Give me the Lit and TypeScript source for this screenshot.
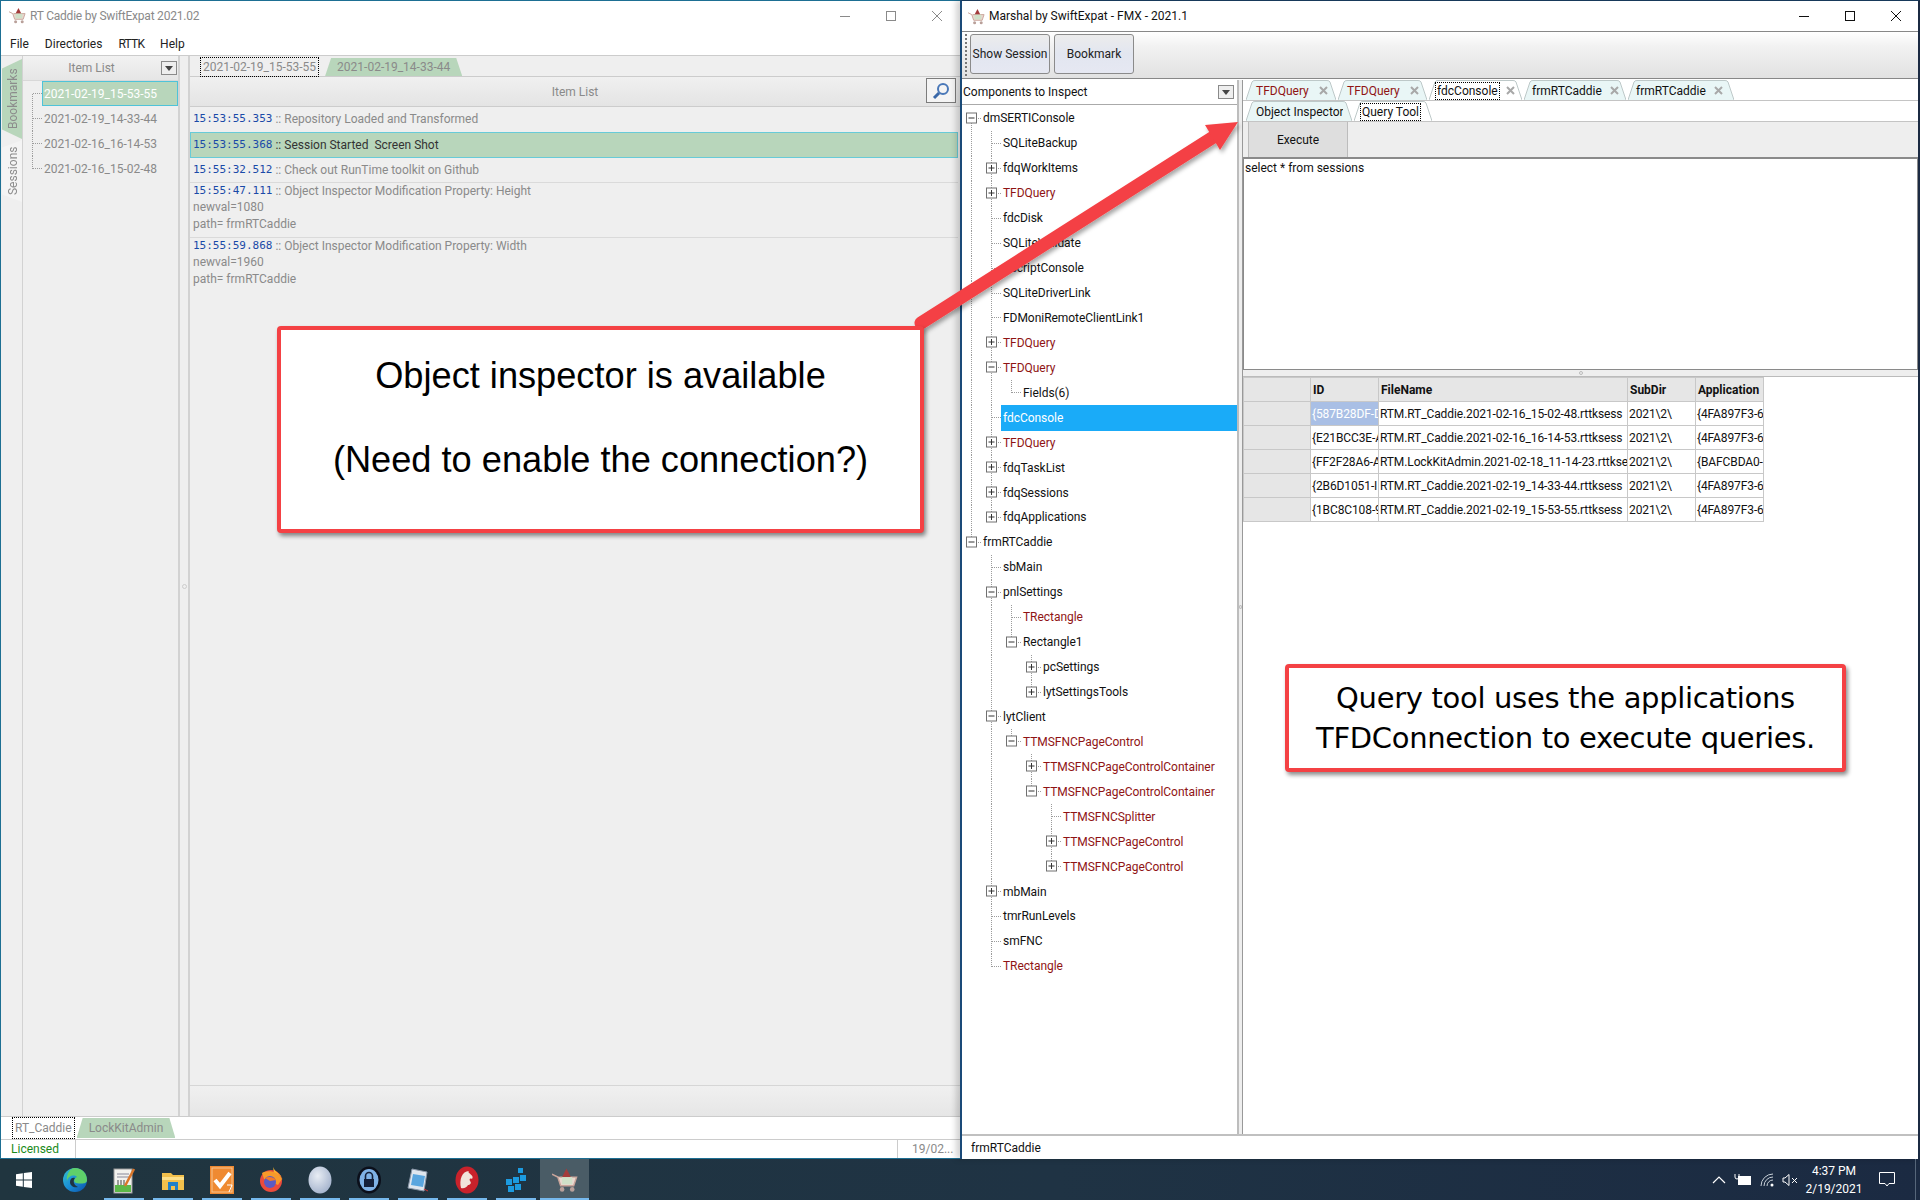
import { LitElement, html, css, svg } from "lit";
import { customElement } from "lit/decorators.js";

type Node = [number, string, string, boolean, boolean?];
const TREE: Node[] = [
  [0, "dmSERTIConsole", "-", false],
  [1, "SQLiteBackup", "", false],
  [1, "fdqWorkItems", "+", false],
  [1, "TFDQuery", "+", true],
  [1, "fdcDisk", "", false],
  [1, "SQLiteValidate", "", false],
  [1, "dScriptConsole", "", false],
  [1, "SQLiteDriverLink", "", false],
  [1, "FDMoniRemoteClientLink1", "", false],
  [1, "TFDQuery", "+", true],
  [1, "TFDQuery", "-", true],
  [2, "Fields(6)", "", false],
  [1, "fdcConsole", "", false, true],
  [1, "TFDQuery", "+", true],
  [1, "fdqTaskList", "+", false],
  [1, "fdqSessions", "+", false],
  [1, "fdqApplications", "+", false],
  [0, "frmRTCaddie", "-", false],
  [1, "sbMain", "", false],
  [1, "pnlSettings", "-", false],
  [2, "TRectangle", "", true],
  [2, "Rectangle1", "-", false],
  [3, "pcSettings", "+", false],
  [3, "lytSettingsTools", "+", false],
  [1, "lytClient", "-", false],
  [2, "TTMSFNCPageControl", "-", true],
  [3, "TTMSFNCPageControlContainer", "+", true],
  [3, "TTMSFNCPageControlContainer", "-", true],
  [4, "TTMSFNCSplitter", "", true],
  [4, "TTMSFNCPageControl", "+", true],
  [4, "TTMSFNCPageControl", "+", true],
  [1, "mbMain", "+", false],
  [1, "tmrRunLevels", "", false],
  [1, "smFNC", "", false],
  [1, "TRectangle", "", true],
];

const hasNext = (i: number, l: number) => {
  for (let j = i + 1; j < TREE.length; j++) {
    if (TREE[j][0] === l) return true;
    if (TREE[j][0] < l) return false;
  }
  return false;
};

const gutter = (i: number) => {
  const [level, , exp] = TREE[i];
  const w = 19 + 20 * level;
  const H = 25;
  const cy = 12.5;
  const parts = [];
  for (let l = 0; l < level; l++) {
    if (hasNext(i, l)) {
      const c = 9.5 + 20 * l;
      parts.push(svg`<line x1=${c} x2=${c} y1="0" y2=${H} class="dot"/>`);
    }
  }
  const c = 9.5 + 20 * level;
  const top = i === 0 ? cy : 0;
  parts.push(svg`<line x1=${c} x2=${c} y1=${top} y2=${hasNext(i, level) ? H : cy} class="dot"/>`);
  parts.push(svg`<line x1=${c} x2=${w} y1=${cy} y2=${cy} class="dot"/>`);
  if (exp) {
    parts.push(svg`<rect x=${c - 5} y=${cy - 5.5} width="10" height="10" fill="#fff" stroke="#707070"/>`);
    parts.push(svg`<line x1=${c - 3} x2=${c + 3} y1=${cy - 0.5} y2=${cy - 0.5} stroke="#333"/>`);
    if (exp === "+") parts.push(svg`<line x1=${c} x2=${c} y1=${cy - 3.5} y2=${cy + 2.5} stroke="#333"/>`);
  }
  return html`<svg class="gut" width=${w} height=${H}>${parts}</svg>`;
};

const ITEMS = ["2021-02-19_15-53-55", "2021-02-19_14-33-44", "2021-02-16_16-14-53", "2021-02-16_15-02-48"];

const LOG = [
  { t: "15:53:55.353", m: ["Repository Loaded and Transformed"], h: 25, cls: "" },
  { t: "15:53:55.368", m: ["Session Started\u00a0\u00a0Screen Shot"], h: 26, cls: "sel" },
  { t: "15:55:32.512", m: ["Check out RunTime toolkit on Github"], h: 25, cls: "line" },
  { t: "15:55:47.111", m: ["Object Inspector Modification Property: Height", "newval=1080", "path= frmRTCaddie"], h: 55, cls: "line" },
  { t: "15:55:59.868", m: ["Object Inspector Modification Property: Width", "newval=1960", "path= frmRTCaddie"], h: 55, cls: "" },
];

const GRID = [
  ["{587B28DF-D", "RTM.RT_Caddie.2021-02-16_15-02-48.rttksess", "2021\\2\\", "{4FA897F3-6"],
  ["{E21BCC3E-A", "RTM.RT_Caddie.2021-02-16_16-14-53.rttksess", "2021\\2\\", "{4FA897F3-6"],
  ["{FF2F28A6-A", "RTM.LockKitAdmin.2021-02-18_11-14-23.rttksess", "2021\\2\\", "{BAFCBDA0-"],
  ["{2B6D1051-I", "RTM.RT_Caddie.2021-02-19_14-33-44.rttksess", "2021\\2\\", "{4FA897F3-6"],
  ["{1BC8C108-9", "RTM.RT_Caddie.2021-02-19_15-53-55.rttksess", "2021\\2\\", "{4FA897F3-6"],
];

const cartIcon = (s = 18) => html`<svg width=${s} height=${s} viewBox="0 0 18 18">
  <path d="M0 5 L4 7 L6 13 H15 L17 7 H5" fill="#e9d8cf" stroke="#c9a49a" stroke-width="1"/>
  <path d="M7 7 L10 1 L13 7 Z" fill="#a33b3b"/><rect x="7" y="7" width="7" height="5" fill="#cfe0c8"/>
  <circle cx="7" cy="15.5" r="1.6" fill="#b9a09a"/><circle cx="14" cy="15.5" r="1.6" fill="#b9a09a"/>
</svg>`;

const slantL = (fill: string, stroke: string) => html`<svg class="edge" width="9" height="20" viewBox="0 0 9 20"><path d="M0 20 L6 2 Q6.6 .5 9 .5 V20 Z" fill=${fill}/><path d="M0 20 L6 2 Q6.6 .5 9 .5" fill="none" stroke=${stroke}/></svg>`;
const slantR = (fill: string, stroke: string) => html`<svg class="edge" width="9" height="20" viewBox="0 0 9 20"><path d="M9 20 L3 2 Q2.4 .5 0 .5 V20 Z" fill=${fill}/><path d="M9 20 L3 2 Q2.4 .5 0 .5" fill="none" stroke=${stroke}/></svg>`;

const xIcon = (m: number) => html`<svg class="tx" width="9" height="9" viewBox="0 0 9 9" style="margin-left:${m}px"><path d="M1 1 L8 8 M8 1 L1 8" stroke="#a8a8a8" stroke-width="2"/></svg>`;

const tabTop = (label: string, w: number, o: { red?: boolean; active?: boolean; x?: number; shift?: number } = {}) => {
  const fill = o.active ? "#fff" : "#e9f6f6";
  const stroke = "#bdc8c8";
  return html`<div class="ttab" style="width:${w}px">
    ${slantL(fill, stroke)}
    <div class="tmid" style="background:${fill}">
      <span class="tlab ${o.red ? "red" : ""} ${o.active ? "focus" : ""}" style="margin-left:${o.shift ?? 0}px">${label}</span>${o.x ? xIcon(o.x) : ""}
    </div>
    ${slantR(fill, stroke)}
  </div>`;
};

const winBtns = (c: string) => html`<div class="wbtns">
  <div class="wb"><svg width="12" height="12"><line x1="1" x2="11" y1="6.5" y2="6.5" stroke=${c}/></svg></div>
  <div class="wb"><svg width="12" height="12"><rect x="1.5" y="1.5" width="9" height="9" fill="none" stroke=${c}/></svg></div>
  <div class="wb"><svg width="12" height="12"><path d="M1 1 L11 11 M11 1 L1 11" stroke=${c} fill="none"/></svg></div>
</div>`;

const drop = html`<svg class="drop" width="16" height="14"><rect x=".5" y=".5" width="15" height="13" fill="#eee" stroke="#8a8a8a"/><path d="M4 5 H12 L8 10 Z" fill="#444"/></svg>`;

const tbIcons = [
  html`<svg width="26" height="26" viewBox="0 0 26 26"><defs><linearGradient id="ed" x1="0" y1="0" x2="1" y2="1"><stop offset="0" stop-color="#35c1d1"/><stop offset=".5" stop-color="#1a8fd6"/><stop offset="1" stop-color="#0a4fa8"/></linearGradient></defs><circle cx="13" cy="13" r="12" fill="url(#ed)"/><path d="M13 1 C20 1 25 6 25 13 C25 17 20 17 14 16 C11 15 12 11 15 10 C12 7 6 9 5 14 C4 9 7 1 13 1Z" fill="#5fd06a"/><path d="M8 15 C8 11 11 10 13 11 C11 13 11 18 16 20 C12 21 8 19 8 15Z" fill="#1f3442"/></svg>`,
  html`<svg width="24" height="28" viewBox="0 0 24 28"><rect x="2" y="3" width="18" height="24" fill="#f2f2ee" stroke="#999"/><path d="M5 8 H17 M5 11 H17" stroke="#889"/><path d="M6 14 V19 M9 14 V19 M12 14 V19" stroke="#444"/><rect x="3" y="19" width="16" height="7" fill="#5cb848"/><path d="M13 20 L22 3" stroke="#d9772b" stroke-width="2.5"/></svg>`,
  html`<svg width="24" height="24" viewBox="0 0 24 24"><path d="M1 5 H10 L12 7 H23 V22 H1 Z" fill="#f2c04c"/><rect x="1" y="9" width="22" height="3" fill="#fde08a"/><rect x="7" y="14" width="10" height="8" fill="#1f7fc8"/><rect x="10" y="18" width="4" height="4" fill="#f2c04c"/></svg>`,
  html`<svg width="26" height="30" viewBox="0 0 26 30"><rect x="1" y="1" width="24" height="28" fill="#ef8a32"/><rect x="3" y="3" width="20" height="24" fill="none" stroke="#f8c48f"/><path d="M6 15 L11 21 L21 8" fill="none" stroke="#fff" stroke-width="4"/><path d="M18 20 H23 L20 27" fill="none" stroke="#fff" stroke-width="1"/></svg>`,
  html`<svg width="26" height="26" viewBox="0 0 26 26"><circle cx="13" cy="14" r="11" fill="#ea4b3c"/><path d="M15 0 C17 6 25 7 25 15 C25 9 20 7 16 6 Z" fill="#ffb52e"/><path d="M4 6 C8 3 20 3 24 12 L20 18 L6 12 Z" fill="#f79a2a"/><circle cx="12" cy="15" r="6" fill="#5a5bc4"/><path d="M7 11 C11 9 16 10 18 13 L12 14 Z" fill="#f4792a"/></svg>`,
  html`<svg width="24" height="28" viewBox="0 0 24 28"><defs><radialGradient id="sp" cx=".4" cy=".35" r=".7"><stop offset="0" stop-color="#e8edf4"/><stop offset="1" stop-color="#a3b2cc"/></radialGradient></defs><ellipse cx="12" cy="14" rx="11.5" ry="13.5" fill="url(#sp)"/></svg>`,
  html`<svg width="26" height="28" viewBox="0 0 26 28"><ellipse cx="13" cy="14" rx="12" ry="13.5" fill="#0b0f1a"/><ellipse cx="13" cy="14" rx="9.5" ry="11" fill="#7fb2e6"/><path d="M9.5 13 V10 A3.5 3.5 0 0 1 16.5 10 V13" fill="none" stroke="#14203a" stroke-width="1.6"/><rect x="8" y="13" width="10" height="8" fill="#14203a"/></svg>`,
  html`<svg width="24" height="26" viewBox="0 0 24 26"><path d="M6 2 L21 5 L18 24 L2 21 Z" fill="#dfe6ee" stroke="#8a97a8"/><path d="M7 7 L19 9 L17 20 L5 18 Z" fill="#5aa6df"/><path d="M18 22 L22 24" stroke="#c33" stroke-width="1"/></svg>`,
  html`<svg width="26" height="28" viewBox="0 0 26 28"><ellipse cx="13" cy="14" rx="11.5" ry="13.5" fill="#c9222b"/><path d="M7 22 C5 14 8 5 15 5 C12 7 21 9 18 13 C16 12 15 13 16 15 C18 17 16 19 14 19 C13 21 10 23 7 22Z" fill="#f1e3da"/></svg>`,
  html`<svg width="24" height="28" viewBox="0 0 24 28"><g fill="#1c9be0"><rect x="2" y="13" width="6" height="6"/><rect x="9" y="11" width="6" height="6"/><rect x="16" y="9" width="6" height="6"/><rect x="4" y="20" width="6" height="6"/><rect x="11" y="18" width="6" height="6"/><rect x="14" y="2" width="5" height="5"/></g></svg>`,
];

@customElement("app-root")
export class AppRoot extends LitElement {
  static styles = css`
    :host { display: block; width: 1920px; height: 1200px; position: relative; overflow: hidden; font: 12px/16px Roboto, "Noto Sans", sans-serif; background: #1f3442; color: #222; }
    * { box-sizing: border-box; }
    .desk { display: flex; height: 1159px; }
    .mono { font-family: "DejaVu Sans Mono", monospace; font-size: 11px; color: #1a4aa8; }
    svg { display: block; flex: none; }

    /* left window */
    .lw { width: 960px; flex: none; display: flex; flex-direction: column; background: #fff; border-top: 1px solid #1d6f93; border-left: 1px solid #1d6f93; border-bottom: 1px solid #1d6f93; color: #8a8a8a; }
    .title { display: flex; align-items: center; height: 29px; flex: none; padding-left: 8px; gap: 4px; }
    .lw .title span { letter-spacing: -.22px; }
    .wbtns { display: flex; margin-left: auto; }
    .wb { width: 46px; height: 29px; display: flex; align-items: center; justify-content: center; }
    .menu { height: 25px; flex: none; display: flex; align-items: center; padding: 2px 0 0 9px; gap: 16px; color: #222; }
    .menu .tight { letter-spacing: -.8px; }
    .lbody { flex: 1; min-height: 0; display: flex; background: #efefef; border-top: 1px solid #ccc; border-bottom: 1px solid #ccc; }
    .vtabs { width: 22px; flex: none; border-right: 1px solid #d2d2d2; display: flex; flex-direction: column; align-items: flex-end; padding-top: 3px; gap: 1px; }
    .vt { width: 20px; padding-right: 2px; writing-mode: vertical-rl; transform: rotate(180deg); display: flex; align-items: center; justify-content: center; color: #8c8c8c; }
    .vt.b { height: 80px; background: #b8d6bb; clip-path: polygon(0 0, 100% 12%, 100% 88%, 0 100%); }
    .vt.s { height: 62px; background: #f4f4f4; clip-path: polygon(0 0, 100% 12%, 100% 88%, 0 100%); }
    .items { width: 157px; flex: none; display: flex; flex-direction: column; border-right: 2px solid #d2d2d2; }
    .ihead { height: 25px; flex: none; display: flex; align-items: center; justify-content: center; position: relative; background: linear-gradient(#f2f2f2, #e6e6e6); border-bottom: 1px solid #d8d8d8; padding-right: 18px; }
    .ihead .drop { position: absolute; right: 1px; top: 5px; }
    .irow { height: 25px; display: flex; align-items: center; }
    .irow .lab { flex: 1; height: 100%; display: flex; align-items: center; padding-left: 2px; }
    .irow.sel .lab { background: #b8d6bb; border: 1px solid #4fc3d9; color: #fff; padding-left: 1px; }
    .dot { stroke: #9c9c9c; stroke-dasharray: 1 1; shape-rendering: crispEdges; }
    .splitv { width: 8px; flex: none; display: flex; align-items: center; justify-content: center; }
    .splitv i { width: 5px; height: 5px; border: 1px solid #ccc; border-radius: 50%; }
    .lmain { flex: 1; min-width: 0; display: flex; flex-direction: column; border-left: 2px solid #d2d2d2; }
    .ltabs { height: 21px; flex: none; display: flex; gap: 7px; padding: 2px 0 0 11px; border-bottom: 1px solid #ccc; }
    .focus { outline: 1px dotted #000; outline-offset: 0; }
    .htab { height: 18px; display: flex; align-items: center; padding: 0 2px; }
    .htab.g { background: #b8d6bb; padding: 0 12px; clip-path: polygon(6px 0, calc(100% - 6px) 0, 100% 100%, 0 100%); }
    .lhead { height: 30px; flex: none; display: flex; align-items: center; justify-content: center; position: relative; background: linear-gradient(#f0f0f0, #e4e4e4); border-bottom: 1px solid #ccc; }
    .search { position: absolute; right: 4px; top: 1px; width: 30px; height: 25px; background: #f4f4f4; border: 1px solid #7c7c7c; display: flex; align-items: center; justify-content: center; }
    .log { flex: 1; min-height: 0; padding-right: 2px; }
    .lrow { padding: 0 0 0 3px; line-height: 16.5px; display: flex; flex-direction: column; }
    .lrow .first { white-space: pre; height: 16px; display: flex; align-items: center; }
    .lrow.line { border-bottom: 1px solid #dadada; }
    .lrow.sel { background: #b8d6bb; border: 1px solid #68cbd8; padding-left: 2px; color: #333; }
    .lrow.one .first { height: 23px; padding-top: 1px; }
    .lfoot { height: 31px; flex: none; background: linear-gradient(#f0f0f0, #e6e6e6); border-top: 1px solid #d6d6d6; }
    .btabs { height: 22px; flex: none; display: flex; gap: 3px; padding: 1px 0 0 12px; }
    .btabs .htab { height: 20px; }
    .lstatus { height: 19px; flex: none; display: flex; align-items: center; border-top: 1px solid #ccc; }
    .lic { width: 75px; padding-left: 10px; color: #1a8a1a; height: 100%; border-right: 1px solid #ccc; display: flex; align-items: center; }
    .st2 { margin-left: auto; width: 63px; padding-left: 14px; height: 100%; border-left: 1px solid #ccc; display: flex; align-items: center; }

    /* right window */
    .rw { width: 960px; flex: none; display: flex; flex-direction: column; background: #fff; border-top: 1px solid #17395a; border-left: 2px solid #1a4a78; border-right: 2px solid #1b2a42; position: relative; box-shadow: -4px 0 6px rgba(0,0,0,.18); color: #111; }
    .rw .title { height: 31px; border-bottom: 1px solid #888; padding-left: 6px; }
    .rw .wb { height: 29px; }
    .rw .wbtns { margin-right: -1px; }
    .tbar { height: 47px; flex: none; display: flex; align-items: center; gap: 4px; padding: 0 0 2px 8px; background: linear-gradient(#fff, #f2f2f2 30%, #e2e2e2); border-bottom: 1px solid #888; position: relative; }
    .tb { width: 80px; height: 40px; display: flex; align-items: center; justify-content: center; border: 1px solid #8b8b8b; border-radius: 3px; background: linear-gradient(#ececec, #e2e6f0 50%, #e6e8f2); color: #222; }
    .grip { position: absolute; left: 3px; top: 2px; bottom: 2px; border-left: 2px dotted #777; }
    .rbody { flex: 1; min-height: 0; display: flex; padding-top: 1px; }
    .tree { width: 275px; flex: none; display: flex; flex-direction: column; }
    .combo { height: 25px; flex: none; display: flex; align-items: center; padding-left: 1px; border-bottom: 1px solid #aaa; position: relative; }
    .combo .drop { position: absolute; right: 3px; top: 5px; }
    .nodes { padding-top: 1px; }
    .node { height: 24.94px; display: flex; align-items: center; white-space: nowrap; letter-spacing: -.04px; }
    .node .lab { flex: 1; height: 100%; display: flex; align-items: center; padding-left: 2px; }
    .node .lab.red { color: #8f1414; }
    .node .lab.sel { background: #1aabf8; color: #fff; height: 26px; }
    .vs { width: 6px; flex: none; background: #eee; border-left: 2px solid #bdbdbd; border-right: 1px solid #999; display: flex; align-items: center; justify-content: center; }
    .vs i { width: 4px; height: 4px; border: 1px solid #bbb; border-radius: 50%; }
    .rpane { flex: 1; min-width: 0; display: flex; flex-direction: column; }
    .trow { height: 21px; flex: none; display: flex; gap: 2px; padding-left: 3px; border-bottom: 1px solid #c4c4c4; align-items: flex-end; }
    .ttab { height: 20px; display: flex; flex: none; }
    .tmid { flex: 1; min-width: 0; display: flex; align-items: center; border-top: 1px solid #bdc8c8; white-space: nowrap; }
    .tlab { padding: 0 1px; line-height: 16px; }
    .tlab.red { color: #8f1414; }
    .tx { position: relative; }
    .exec { height: 35px; flex: none; background: #eee; padding-left: 5px; }
    .exbtn { width: 100px; height: 35px; background: #dedede; border: 1px solid #bcbcbc; border-width: 0 1px; display: flex; align-items: center; justify-content: center; }
    .memo { height: 213px; flex: none; border: 1px solid #8a8a8a; border-top-width: 2px; padding: 1px 1px; }
    .hs { height: 7px; flex: none; background: #eee; border-bottom: 1px solid #bbb; display: flex; align-items: center; justify-content: center; }
    .hs i { width: 4px; height: 4px; border: 1px solid #bbb; border-radius: 50%; }
    .grid { display: grid; grid-template-columns: 67px 68px 249px 68px 68px; grid-auto-rows: 24px; width: max-content; border-top: 1px solid #c8c8c8; border-left: 1px solid #c8c8c8; }
    .c { border-right: 1px solid #c8c8c8; border-bottom: 1px solid #c8c8c8; overflow: hidden; white-space: nowrap; display: flex; align-items: center; padding-left: 1px; letter-spacing: -.11px; }
    .c.h { background: #e6e6e6; font-weight: 700; padding-left: 2px; letter-spacing: 0; }
    .c.i { background: #e6e6e6; }
    .c.s { background: #a9bfe5; color: #fff; }
    .rstatus { height: 25px; flex: none; border-top: 2px solid #c0c0c0; display: flex; align-items: center; padding-left: 9px; }

    /* taskbar */
    .task { height: 41px; display: flex; align-items: center; background: linear-gradient(90deg, #20353f, #1f3344 55%, #1b2a42); color: #fff; }
    .tstart { width: 50px; flex: none; display: flex; justify-content: center; padding-right: 2px; }
    .ti { width: 49px; height: 41px; flex: none; display: flex; align-items: center; justify-content: center; position: relative; }
    .ti.open::after { content: ""; position: absolute; left: 4.5px; right: 4.5px; bottom: 0; height: 2px; background: #76b9ed; }
    .ti.act { background: #4a5c66; }
    .ti.act::after { left: 0; right: 0; }
    .tray { margin-left: auto; display: flex; align-items: center; height: 100%; }
    .clock { width: 66px; text-align: center; line-height: 18px; font-size: 12px; margin-left: 3px; }
    .note { margin: 0 20px 0 12px; }
    .trayg { display: flex; align-items: center; gap: 8px; }
    .deskline { width: 1px; height: 41px; background: #56667a; margin-right: 4px; }

    /* overlays */
    .over { position: absolute; left: 0; top: 0; pointer-events: none; }
    .call { position: absolute; background: #fff; border: 4px solid #f44144; border-radius: 4px; box-shadow: 2px 3px 4px rgba(0,0,0,.45); color: #000; display: flex; flex-direction: column; align-items: center; justify-content: center; }
    .call.a { left: 277px; top: 326px; width: 647px; height: 207px; padding-bottom: 23px; font: 36.2px/84px "Liberation Sans", Arial, sans-serif; }
    .call.b { left: 1285px; top: 664px; width: 561px; height: 108px; font: 29px/40px "DejaVu Sans", Verdana, sans-serif; letter-spacing: -.32px; }
  `;

  render() {
    return html`
      <div class="desk">
        <div class="lw">
          <div class="title">${cartIcon(17)}<span>RT Caddie by SwiftExpat 2021.02</span>${winBtns("#8a8a8a")}</div>
          <div class="menu"><span>File</span><span>Directories</span><span class="tight">RTTK</span><span>Help</span></div>
          <div class="lbody">
            <div class="vtabs"><div class="vt b">Bookmarks</div><div class="vt s">Sessions</div></div>
            <div class="items">
              <div class="ihead">Item List ${drop}</div>
              <div>
                ${ITEMS.map((t, i) => html`<div class="irow ${i === 0 ? "sel" : ""}">
                  <svg width="19" height="25"><line x1="9.5" x2="9.5" y1=${i === 0 ? 12.5 : 0} y2=${i === 3 ? 12.5 : 25} class="dot"/><line x1="9.5" x2="19" y1="12.5" y2="12.5" class="dot"/></svg>
                  <div class="lab">${t}</div></div>`)}
              </div>
            </div>
            <div class="splitv"><i></i></div>
            <div class="lmain">
              <div class="ltabs"><div class="htab focus">2021-02-19_15-53-55</div><div class="htab g">2021-02-19_14-33-44</div></div>
              <div class="lhead">Item List
                <div class="search"><svg width="18" height="18" viewBox="0 0 18 18"><circle cx="11" cy="7" r="5" fill="none" stroke="#4a78b8" stroke-width="2"/><path d="M7 11 L2 16" stroke="#3a68a8" stroke-width="3"/></svg></div>
              </div>
              <div class="log">
                ${LOG.map((r) => html`<div class="lrow ${r.cls} ${r.m.length === 1 ? "one" : ""}" style="height:${r.h}px">
                  <div class="first"><span class="mono">${r.t}</span> :: ${r.m[0]}</div>
                  ${r.m.slice(1).map((x) => html`<div>${x}</div>`)}
                </div>`)}
              </div>
              <div class="lfoot"></div>
            </div>
          </div>
          <div class="btabs"><div class="htab focus">RT_Caddie</div><div class="htab g">LockKitAdmin</div></div>
          <div class="lstatus"><div class="lic">Licensed</div><div class="st2">19/02...</div></div>
        </div>

        <div class="rw">
          <div class="title">${cartIcon(17)}<span>Marshal by SwiftExpat - FMX - 2021.1</span>${winBtns("#111")}</div>
          <div class="tbar"><div class="grip"></div><div class="tb">Show Session</div><div class="tb">Bookmark</div></div>
          <div class="rbody">
            <div class="tree">
              <div class="combo">Components to Inspect ${drop}</div>
              <div class="nodes">
                ${TREE.map((n, i) => html`<div class="node">${gutter(i)}<div class="lab ${n[3] ? "red" : ""} ${n[4] ? "sel" : ""}">${n[1]}</div></div>`)}
              </div>
            </div>
            <div class="vs"><i></i></div>
            <div class="rpane">
              <div class="trow">
                ${tabTop("TFDQuery", 90, { red: true, x: 9 })}
                ${tabTop("TFDQuery", 89, { red: true, x: 9, shift: -1 })}
                ${tabTop("fdcConsole", 93, { active: true, x: 7, shift: -2 })}
                ${tabTop("frmRTCaddie", 102, { x: 7, shift: -2 })}
                ${tabTop("frmRTCaddie", 106, { x: 7, shift: -2 })}
              </div>
              <div class="trow">
                ${tabTop("Object Inspector", 106)}
                ${tabTop("Query Tool", 78, { active: true, shift: -2 })}
              </div>
              <div class="exec"><div class="exbtn">Execute</div></div>
              <div class="memo">select * from sessions</div>
              <div class="hs"><i></i></div>
              <div class="grid">
                <div class="c h"></div><div class="c h">ID</div><div class="c h">FileName</div><div class="c h">SubDir</div><div class="c h">Application</div>
                ${GRID.map((r, i) => html`<div class="c i"></div>${r.map((v, j) => html`<div class="c ${i === 0 && j === 0 ? "s" : ""}">${v}</div>`)}`)}
              </div>
            </div>
          </div>
          <div class="rstatus">frmRTCaddie</div>
        </div>
      </div>

      <div class="task">
        <div class="tstart"><svg width="16" height="16" viewBox="0 0 16 16"><path d="M0 2.2 L6.8 1.2 V7.5 H0 Z M7.8 1 L16 0 V7.5 H7.8 Z M0 8.5 H6.8 V14.8 L0 13.8 Z M7.8 8.5 H16 V16 L7.8 15 Z" fill="#fff"/></svg></div>
        ${tbIcons.map((ic, i) => html`<div class="ti ${i > 0 ? "open" : ""}">${ic}</div>`)}
        <div class="ti open act">${cartIcon(26)}</div>
        <div class="tray">
          <div class="trayg">
            <svg width="14" height="10" viewBox="0 0 14 10"><path d="M1 8 L7 2 L13 8" fill="none" stroke="#fff" stroke-width="1.2"/></svg>
            <svg width="18" height="14" viewBox="0 0 18 14"><rect x="4.5" y="3.5" width="12" height="8" fill="#fff" stroke="#fff"/><path d="M1 1 V4 A2 2 0 0 0 5 4 V1" fill="none" stroke="#fff"/></svg>
            <svg width="14" height="14" viewBox="0 0 14 14"><path d="M1 13 A12 12 0 0 1 13 1 M4 13 A9 9 0 0 1 13 4 M7 13 A6 6 0 0 1 13 7" fill="none" stroke="#c8d0d8"/><circle cx="12" cy="12" r="1.5" fill="#fff"/></svg>
            <svg width="16" height="12" viewBox="0 0 16 12"><path d="M1 4 H3 L7 .5 V11.5 L3 8 H1 Z" fill="none" stroke="#fff"/><path d="M10 4 L15 9 M15 4 L10 9" stroke="#fff"/></svg>
          </div>
          <div class="clock">4:37 PM<br />2/19/2021</div>
          <div class="note"><svg width="16" height="15" viewBox="0 0 16 15"><path d="M.5 .5 H15.5 V11.5 H10 L8 14 L6 11.5 H.5 Z" fill="none" stroke="#fff"/></svg></div>
          <div class="deskline"></div>
        </div>
      </div>

      <svg class="over" width="1920" height="1200">
        <defs><filter id="as" x="-10%" y="-10%" width="120%" height="120%"><feDropShadow dx="2" dy="3" stdDeviation="2" flood-color="#000" flood-opacity=".35"/></filter></defs>
        <g filter="url(#as)">
          <line x1="921" y1="323" x2="1215" y2="136" stroke="#f44144" stroke-width="13" stroke-linecap="round"/>
          <path d="M1238 122 L1205 125 L1220 150 Z" fill="#f44144"/>
        </g>
      </svg>
      <div class="call a"><div>Object inspector is available</div><div>(Need to enable the connection?)</div></div>
      <div class="call b"><div>Query tool uses the applications</div><div>TFDConnection to execute queries.</div></div>
    `;
  }
}
